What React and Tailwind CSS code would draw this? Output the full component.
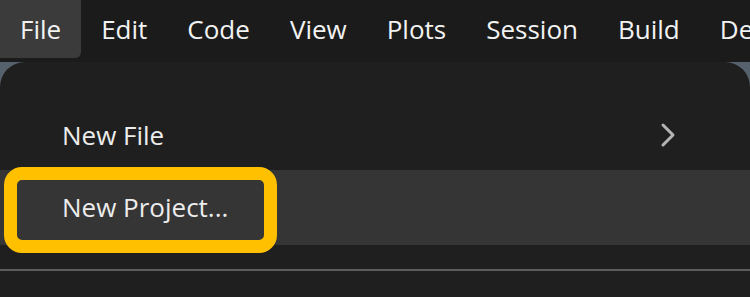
import React from "react";

const menus = ["File", "Edit", "Code", "View", "Plots", "Session", "Build", "Debug"];

function App() {
  return (
    <div
      className="w-[750px] h-[297px] overflow-hidden bg-[#1b1b1b] text-[#f2f2f2]"
      style={{ fontFamily: '"Open Sans", "Noto Sans", sans-serif' }}
    >
      <div className="h-[62px] flex items-start whitespace-nowrap">
        {menus.map((m, i) => (
          <div
            key={m}
            className={
              i === 0
                ? "h-[58px] px-[20px] flex items-center bg-[#3b3b3b] rounded-br-[6px] text-[26px]"
                : "h-[58px] px-[20px] flex items-center text-[26px]"
            }
          >
            {m}
          </div>
        ))}
      </div>

      <div className="bg-[#56616e] h-[235px]">
        <div className="relative h-full bg-[#1f1f1f] rounded-t-[25px] pt-[38px] text-[#ececec] text-[26px]">
          <div className="h-[70px] flex items-center justify-between pl-[62px] pr-[74px]">
            <span>New File</span>
            <svg width="16" height="26" viewBox="0 0 16 26" fill="none" stroke="#b4b4b4" strokeWidth="3" strokeLinecap="round" strokeLinejoin="round">
              <path d="M3 3l10 10L3 23" />
            </svg>
          </div>
          <div className="h-[75px] flex items-center pl-[62px] bg-[#353535]">
            <span>New Project...</span>
          </div>
          <div className="h-[2px] mt-[24px] bg-[#5c5c5c]" />

          <div className="absolute left-[4px] top-[105px] w-[273px] h-[86px] rounded-[18px] border-[13px] border-[#ffc000]" />
        </div>
      </div>
    </div>
  );
}

export default App;
